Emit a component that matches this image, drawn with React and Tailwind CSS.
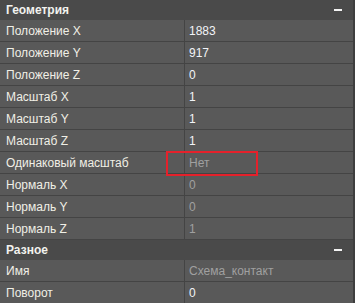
import React from 'react';

const geometry = [
    { label: 'Положение X', value: '1883' },
    { label: 'Положение Y', value: '917' },
    { label: 'Положение Z', value: '0' },
    { label: 'Масштаб X', value: '1' },
    { label: 'Масштаб Y', value: '1' },
    { label: 'Масштаб Z', value: '1' },
    { label: 'Одинаковый масштаб', value: 'Нет', muted: true, marked: true },
    { label: 'Нормаль X', value: '0', muted: true },
    { label: 'Нормаль Y', value: '0', muted: true },
    { label: 'Нормаль Z', value: '1', muted: true },
];

const misc = [
    { label: 'Имя', value: 'Схема_контакт', muted: true },
    { label: 'Поворот', value: '0' },
];

function Section({ title }) {
    return (
        <div className="h-[20px] flex items-center justify-between bg-[#4a4a4a] pl-[6px] pr-[11px]">
            <span className="font-bold text-[#f2f2ee]">{title}</span>
            <span className="block w-[8px] h-[2px] bg-[#f4f4f4]" />
        </div>
    );
}

function Row({ label, value, muted, marked }) {
    return (
        <div className="h-[22px] flex border-b border-[#444444] bg-[#595959]">
            <div className="w-[185px] flex items-center pl-[6px] pt-[1px] border-r border-[#444444] text-[#f0efe6] whitespace-nowrap">
                {label}
            </div>
            <div className={`relative flex-1 flex items-center pl-[4px] pt-[1px] ${muted ? 'text-[#a0a0a0]' : 'text-[#f2f4f8]'}`}>
                {value}
                {marked && (
                    <div className="absolute left-[-19px] top-[-1px] w-[92px] h-[25px] border-2 border-[#e5212b]" />
                )}
            </div>
        </div>
    );
}

export default function App() {
    return (
        <div
            className="w-[355px] h-[303px] overflow-hidden bg-[#595959] border-r-2 border-[#3e3e3e] text-[12px] leading-none"
            style={{ fontFamily: '"Liberation Sans", Arial, sans-serif' }}
        >
            <Section title="Геометрия" />
            {geometry.map((r) => (
                <Row key={r.label} {...r} />
            ))}
            <Section title="Разное" />
            {misc.map((r) => (
                <Row key={r.label} {...r} />
            ))}
        </div>
    );
}
